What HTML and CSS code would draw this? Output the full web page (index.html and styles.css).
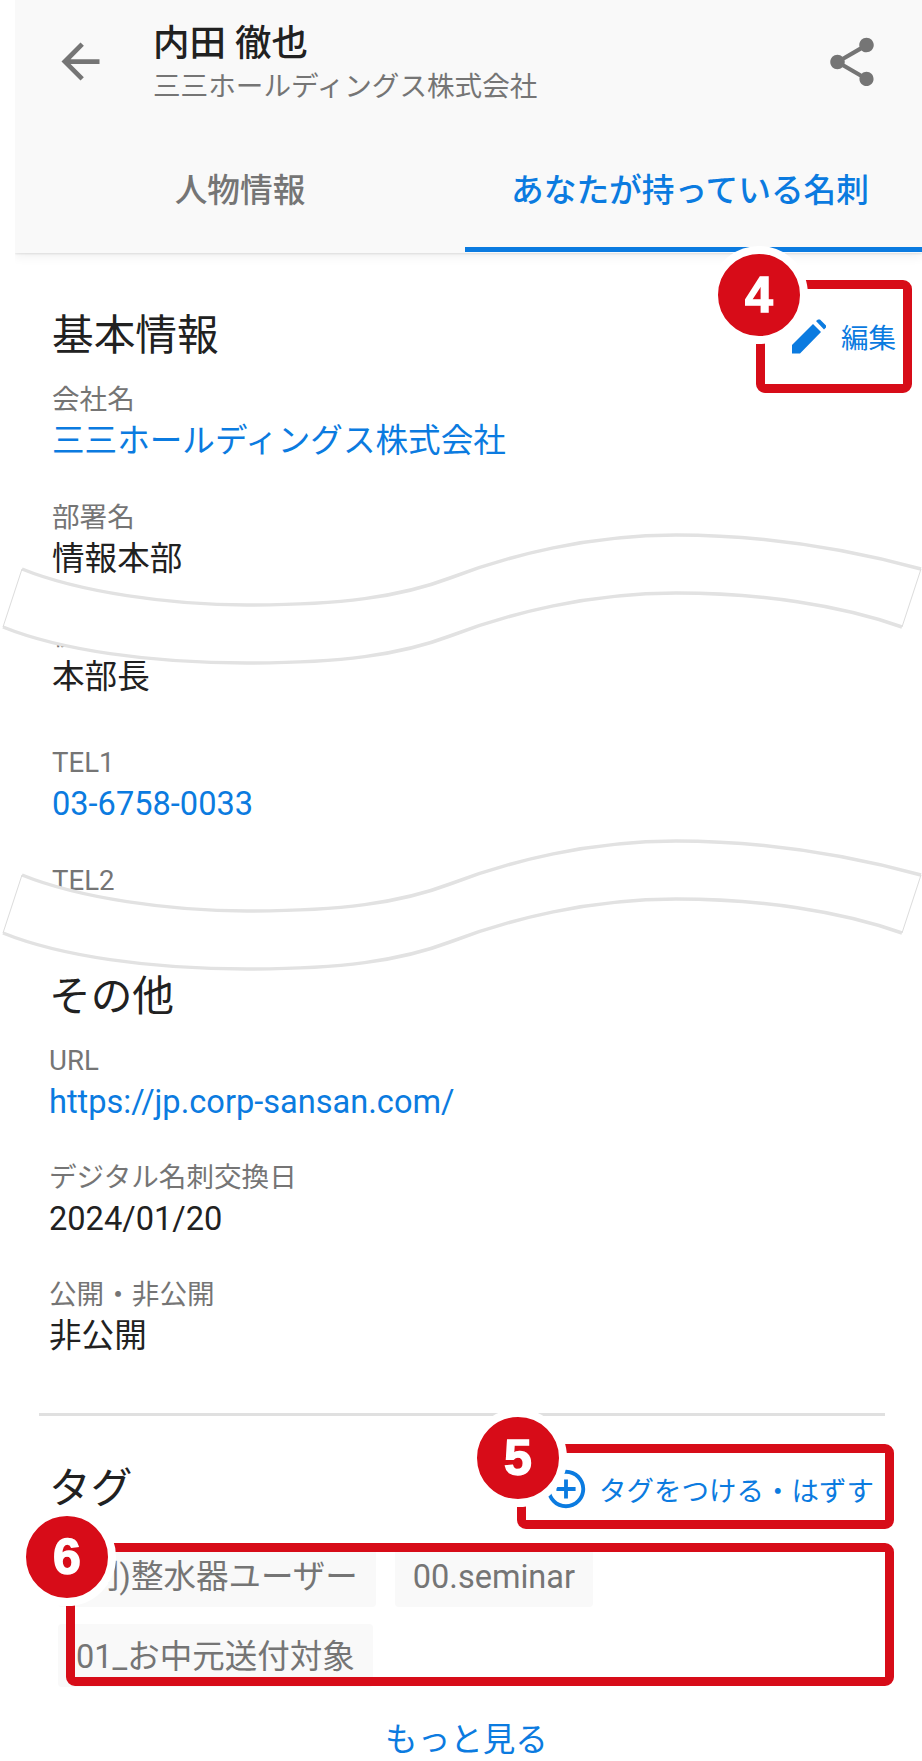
FILE: index.html
```html
<!DOCTYPE html>
<html lang="ja">
<head>
  <meta charset="UTF-8">
  <title>内田 徹也</title>
  <link rel="stylesheet" href="styles.css">
</head>
<body>
  <div class="page">
    <header class="app-header">
      <div class="toolbar">
        <svg class="icon-back" viewBox="0 0 24 24"><path d="M20 11H7.83l5.59-5.59L12 4l-8 8 8 8 1.41-1.41L7.83 13H20v-2z"/></svg>
        <div class="person">
          <div class="person-name">内田 徹也</div>
          <div class="person-company">三三ホールディングス株式会社</div>
        </div>
        <svg class="icon-share" viewBox="0 0 24 24"><path d="M18 16.08c-.76 0-1.44.3-1.96.77L8.91 12.7c.05-.23.09-.46.09-.7s-.04-.47-.09-.7l7.05-4.11c.54.5 1.25.81 2.04.81 1.66 0 3-1.34 3-3s-1.34-3-3-3-3 1.34-3 3c0 .24.04.47.09.7L8.04 9.81C7.5 9.31 6.79 9 6 9c-1.66 0-3 1.34-3 3s1.34 3 3 3c.79 0 1.5-.31 2.04-.81l7.12 4.16c-.05.21-.08.43-.08.65 0 1.61 1.31 2.92 2.92 2.92 1.61 0 2.92-1.31 2.92-2.92s-1.31-2.92-2.92-2.92z"/></svg>
      </div>
      <nav class="tabs">
        <div class="tab">人物情報</div>
        <div class="tab active">あなたが持っている名刺</div>
      </nav>
    </header>

    <section class="section basic">
      <div class="section-head">
        <h2>基本情報</h2>
        <div class="action">
          <svg class="icon-edit" viewBox="0 0 35 35"><path d="M0 26L21 5L29 13L8 34.5H0zM24 2L26 .5H28L34 6.5V8.5L32 10.500z"/></svg>
          <span>編集</span>
        </div>
      </div>
      <div class="field">
        <div class="label">会社名</div>
        <div class="value link">三三ホールディングス株式会社</div>
      </div>
      <div class="field">
        <div class="label">部署名</div>
        <div class="value">情報本部</div>
      </div>
      <div class="field spliced">
        <div class="label">役職</div>
        <div class="value">本部長</div>
      </div>
      <div class="field">
        <div class="label">TEL1</div>
        <div class="value link">03-6758-0033</div>
      </div>
      <div class="field cut">
        <div class="label">TEL2</div>
      </div>
    </section>

    <section class="section other">
      <h2>その他</h2>
      <div class="field">
        <div class="label">URL</div>
        <div class="value link">https://jp.corp-sansan.com/</div>
      </div>
      <div class="field">
        <div class="label">デジタル名刺交換日</div>
        <div class="value">2024/01/20</div>
      </div>
      <div class="field">
        <div class="label">公開・非公開</div>
        <div class="value">非公開</div>
      </div>
    </section>

    <hr class="divider">

    <section class="section tags">
      <div class="section-head">
        <h2>タグ</h2>
        <div class="action">
          <svg class="icon-add" viewBox="0 0 24 24"><path d="M13 7h-2v4H7v2h4v4h2v-4h4v-2h-4V7zm-1-5C6.48 2 2 6.48 2 12s4.48 10 10 10 10-4.48 10-10S17.52 2 12 2zm0 18c-4.41 0-8-3.59-8-8s3.59-8 8-8 8 3.59 8 8-3.59 8-8 8z"/></svg>
          <span>タグをつける・はずす</span>
        </div>
      </div>
      <div class="chips">
        <span class="chip">(別)整水器ユーザー</span>
        <span class="chip">00.seminar</span>
        <span class="chip">01_お中元送付対象</span>
      </div>
      <div class="more">もっと見る</div>
    </section>

    <svg class="wave wave-one" viewBox="0 525 922 150"><use href="#wave-shape"/></svg>
    <svg class="wave wave-two" viewBox="0 525 922 150">
      <defs>
        <g id="wave-shape">
          <path class="wave-fill" d="M22 569C79 592 170 605 247 605C340 605 400 597 450 578C510 555 590 535 676 535C760 535 840 547 921 569L902 627C840 605 760 593 676 593C590 593 510 613 450 636C400 655 340 663 247 663C150 663 60 650 3 627Z"/>
          <path class="wave-line" d="M22 569C79 592 170 605 247 605C340 605 400 597 450 578C510 555 590 535 676 535C760 535 840 547 921 569"/>
          <path class="wave-line" d="M3 627C60 650 150 663 247 663C340 663 400 655 450 636C510 613 590 593 676 593C760 593 840 605 902 627"/>
          <path class="wave-side" d="M22 569L3 627M921 569L902 627"/>
        </g>
      </defs>
      <use href="#wave-shape"/>
    </svg>

    <div class="callout box-edit"></div>
    <div class="badge badge-edit">4</div>
    <div class="callout box-add"></div>
    <div class="badge badge-add">5</div>
    <div class="callout box-chips"></div>
    <div class="badge badge-chips">6</div>
  </div>
</body>
</html>
```

FILE: styles.css
```css
body {
  margin: 0;
  background: #fff;
  font-family: Roboto, "Noto Sans CJK JP", sans-serif;
  color: #212121;
}

.page {
  position: relative;
  width: 922px;
  height: 1761px;
  overflow: hidden;
}

.app-header {
  margin-left: 15px;
  height: 253px;
  background-color: #f9f9f9;
  box-shadow: 0 1px 2px rgba(0, 0, 0, 0.1), 0 4px 10px rgba(0, 0, 0, 0.06);
  clip-path: inset(0 0 -20px 0);
}

.toolbar {
  display: flex;
  align-items: flex-start;
  height: 128px;
  padding: 0 41px 0 37px;
}

.icon-back {
  width: 57px;
  height: 57px;
  margin-top: 33px;
  fill: #757575;
}

.person {
  flex: 1;
  margin-left: 44px;
  padding-top: 19px;
}

.person-name {
  font-size: 36.5px;
  line-height: 50px;
  font-weight: 500;
}

.person-company {
  font-size: 27.6px;
  line-height: 36px;
  color: #757575;
}

.icon-share {
  width: 58px;
  height: 58px;
  margin-top: 33px;
  fill: #757575;
}

.tabs {
  display: grid;
  grid-template-columns: 450px 457px;
  height: 124px;
}

.tab {
  display: flex;
  align-items: center;
  justify-content: center;
  font-size: 32.7px;
  font-weight: 500;
  color: #757575;
  border-bottom: 5px solid transparent;
}

.tab.active {
  padding-right: 7px;
  color: #0b7be0;
  border-bottom-color: #0b7be0;
}

.section {
  padding-left: 52px;
  padding-right: 26px;
}

.basic {
  padding-top: 53px;
}

.section h2 {
  margin: 0;
  font-size: 41.7px;
  line-height: 60px;
  font-weight: 400;
}

.section-head {
  display: flex;
  align-items: center;
  justify-content: space-between;
  margin-bottom: 15px;
}

.action {
  display: flex;
  align-items: center;
  font-size: 27.5px;
  color: #0b7be0;
}

.icon-edit {
  width: 35px;
  height: 35px;
  margin-right: 14px;
  fill: #0b7be0;
}

.icon-add {
  width: 46px;
  height: 46px;
  margin-right: 10px;
  fill: #0b7be0;
}

.field {
  height: 118px;
}

.field.spliced {
  height: 127px;
}

.field.cut {
  height: 105px;
}

.label {
  font-size: 27.6px;
  line-height: 38px;
  color: #757575;
}

.value {
  font-size: 32.6px;
  line-height: 44px;
}

.link {
  color: #0b7be0;
}

.other {
  padding-left: 49px;
}

.other h2 {
  margin-bottom: 15px;
}

.other .field {
  height: 117px;
}

.divider {
  height: 3px;
  margin: 20px 37px 0 39px;
  border: 0;
  background-color: #e0e0e0;
}

.tags {
  padding-top: 43px;
  padding-left: 49px;
  padding-right: 48px;
}

.tags .section-head {
  margin-bottom: 25px;
}

.chips {
  display: flex;
  flex-wrap: wrap;
  gap: 17px 19px;
  margin-left: 9px;
  width: 600px;
}

.chip {
  height: 63px;
  line-height: 67px;
  padding: 0 18px;
  font-size: 32.5px;
  color: #757575;
  background-color: #f9f9f9;
  border-radius: 4px;
  white-space: nowrap;
}

.more {
  margin-top: 31px;
  margin-left: -38px;
  margin-right: -48px;
  text-align: center;
  font-size: 32.6px;
  line-height: 44px;
  color: #0b7be0;
}

/* wavy page-break marks drawn over the content */
.wave {
  position: absolute;
  left: 0;
  width: 922px;
  height: 150px;
}

.wave-one {
  top: 525px;
}

.wave-two {
  top: 831px;
}

.wave-fill {
  fill: #fff;
}

.wave-line {
  fill: none;
  stroke: #e2e2e2;
  stroke-width: 3.5;
}

.wave-side {
  fill: none;
  stroke: #dcdcdc;
  stroke-width: 1;
}

/* red annotation boxes and numbered badges */
.callout {
  position: absolute;
  box-sizing: border-box;
  border: 9px solid #d70c18;
  border-radius: 9px;
}

.box-edit {
  left: 756px;
  top: 280px;
  width: 156px;
  height: 113px;
}

.box-add {
  left: 517px;
  top: 1444px;
  width: 377px;
  height: 85px;
}

.box-chips {
  left: 66px;
  top: 1543px;
  width: 828px;
  height: 143px;
}

.badge {
  position: absolute;
  width: 82px;
  height: 82px;
  border: 8px solid #fff;
  border-radius: 50%;
  background-color: #d70c18;
  color: #fff;
  font-family: "Liberation Sans", sans-serif;
  font-size: 50px;
  font-weight: 700;
  -webkit-text-stroke: 1.5px #fff;
  line-height: 82px;
  text-align: center;
}

.badge-edit {
  left: 710px;
  top: 246px;
}

.badge-add {
  left: 469px;
  top: 1409px;
}

.badge-chips {
  left: 18px;
  top: 1508px;
}
```
